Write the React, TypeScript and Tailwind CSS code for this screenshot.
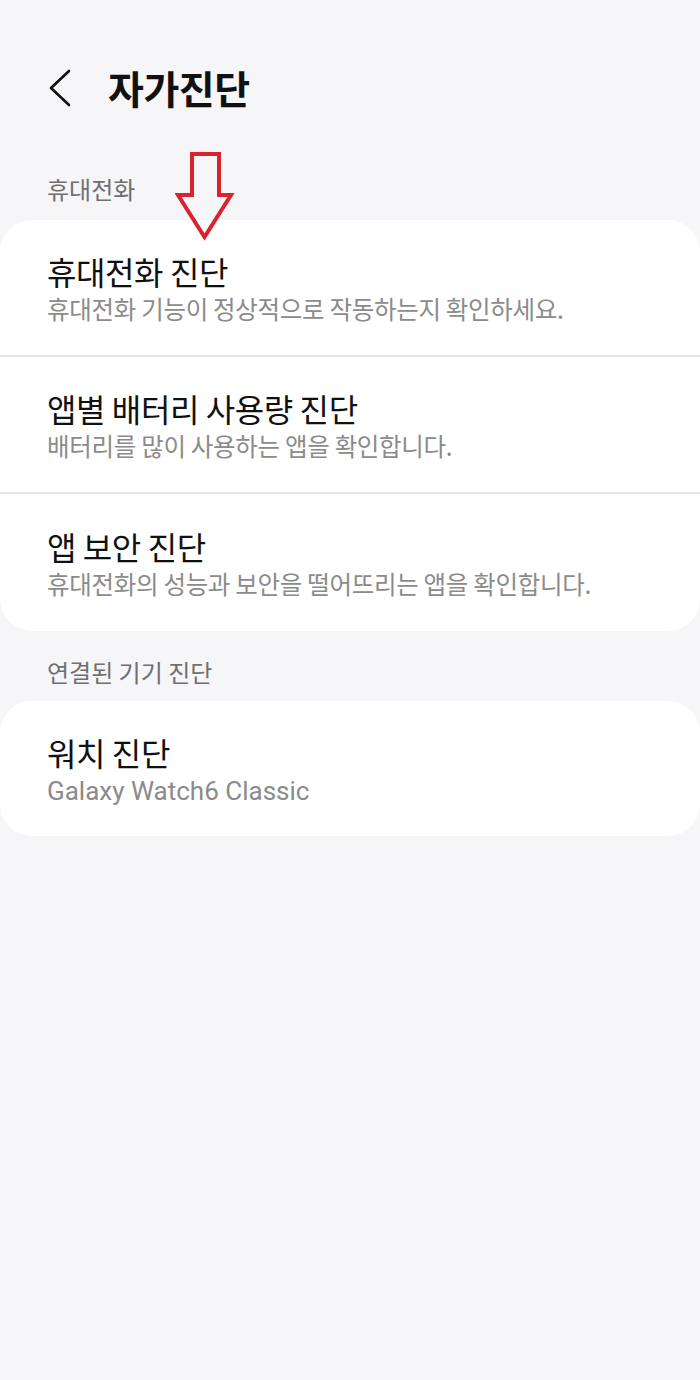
import React from "react";

const font = { fontFamily: '"Noto Sans CJK KR", "Noto Sans", sans-serif' };

function Item({ title, sub, divider }: { title: string; sub: string; divider?: boolean }) {
  return (
    <div className={`flex flex-col justify-center h-[137px] pl-[47px] pr-4 ${divider ? "border-b-2 border-[#e6e5e8]" : ""}`}>
      <div className="text-[32px] leading-[38px] text-[#111111] tracking-[-0.4px] whitespace-nowrap">{title}</div>
      <div className="text-[24.5px] leading-[30px] text-[#8b8b8b] mt-[4px] tracking-[-0.3px] whitespace-nowrap">{sub}</div>
    </div>
  );
}

export default function App() {
  return (
    <div className="w-[700px] h-[1380px] bg-[#f6f5f8] relative overflow-hidden" style={font}>
      <div className="flex items-center h-[87px] mt-[44px]">
        <svg width="30" height="40" viewBox="0 0 30 40" className="ml-[44px]">
          <path d="M25 3 L7 20 L25 37" fill="none" stroke="#111" strokeWidth="2.6" strokeLinecap="round" strokeLinejoin="round" />
        </svg>
        <div className="ml-[34px] text-[39px] font-bold text-[#111] tracking-[-0.5px]">자가진단</div>
      </div>
      <div className="pl-[47px] text-[24px] text-[#6f6f72] h-[89px] flex items-center pt-[26px]">휴대전화</div>
      <div className="bg-white rounded-[32px] overflow-hidden">
        <Item title="휴대전화 진단" sub="휴대전화 기능이 정상적으로 작동하는지 확인하세요." divider />
        <Item title="앱별 배터리 사용량 진단" sub="배터리를 많이 사용하는 앱을 확인합니다." divider />
        <Item title="앱 보안 진단" sub="휴대전화의 성능과 보안을 떨어뜨리는 앱을 확인합니다." />
      </div>
      <div className="pl-[47px] text-[24px] text-[#6f6f72] h-[70px] flex items-center pt-[12px]">연결된 기기 진단</div>
      <div className="bg-white rounded-[32px] overflow-hidden">
        <div className="flex flex-col justify-center h-[135px] pl-[47px] pt-[2px]">
          <div className="text-[32px] leading-[38px] text-[#111111] tracking-[-0.4px]">워치 진단</div>
          <div className="text-[26px] leading-[30px] text-[#8b8b8b] mt-[5px]" style={{ fontFamily: 'Roboto, "Noto Sans", sans-serif' }}>Galaxy Watch6 Classic</div>
        </div>
      </div>
      <svg className="absolute left-[175px] top-[151px]" width="60" height="90" viewBox="0 0 60 90">
        <path d="M17 3 L44 3 L44 44 L56 44 L29.5 86 L3 44 L17 44 Z" fill="none" stroke="#d9232e" strokeWidth="4" strokeLinejoin="miter" />
      </svg>
    </div>
  );
}
